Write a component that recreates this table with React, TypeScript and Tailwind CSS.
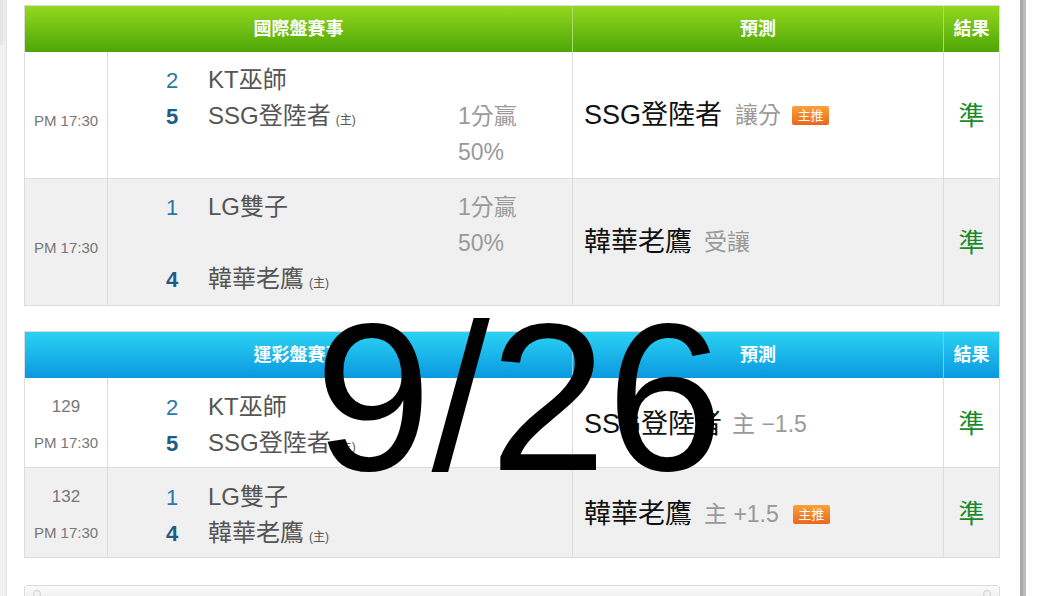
import React from "react";

type Team = { num: string; name: string; home?: boolean; win?: boolean };

const Num = ({ t }: { t: Team }) => (
  <span
    className={
      "w-[24px] text-center text-[22px] " +
      (t.win ? "font-bold text-[#1b5c88]" : "text-[#2a77ab]")
    }
  >
    {t.num}
  </span>
);

const TeamLine = ({ t }: { t: Team }) => (
  <div className="flex items-baseline h-[36px] leading-[36px]">
    <Num t={t} />
    <span className="ml-[24px] text-[24px] text-[#555]">{t.name}</span>
    {t.home && <span className="ml-[5px] text-[12px] text-[#555]">(主)</span>}
  </div>
);

const Empty = () => <div className="h-[36px]" />;

const Badge = () => (
  <span className="ml-[11px] inline-flex items-center justify-center h-[19px] w-[37px] rounded-[2px] bg-gradient-to-b from-[#f9a23a] to-[#e9661b] text-white text-[13px] leading-none">
    主推
  </span>
);

const Header = ({ title, from, to, sep }: { title: string; from: string; to: string; sep: string }) => (
  <div className={"grid grid-cols-[547px_371px_1fr] h-[46px] text-white font-bold text-[18px] " + from + " " + to + " bg-gradient-to-b"}>
    <div className="flex items-center justify-center">{title}</div>
    <div className={"flex items-center justify-center border-l " + sep}>預測</div>
    <div className={"flex items-center justify-center border-l " + sep}>結果</div>
  </div>
);

const Result = () => (
  <div className="border-l border-[#dcdcdc] flex items-center justify-center pt-[3px] text-[26px] text-[#1b8a2c]">準</div>
);

export default function App() {
  return (
    <div className="relative w-[1038px] h-[596px] overflow-hidden bg-white flex font-['Liberation_Sans','Noto_Sans_CJK_TC',sans-serif]">
      {/* left edge */}
      <div className="w-[7px] flex flex-col border-r border-[#e2e2e2]">
        <div className="h-[45px] bg-gradient-to-r from-[#e4e4e4] to-[#efefef]" />
        <div className="flex-1 bg-[#f1f1f1]" />
      </div>

      <main className="w-[1013px] pl-[17px] pr-[20px] pt-[5px] flex flex-col">
        {/* Table 1 */}
        <div className="border border-[#dcdcdc]">
          <Header title="國際盤賽事" from="from-[#93d81d]" to="to-[#4da608]" sep="border-[#a8dd6a]" />
          {/* row 1 */}
          <div className="grid grid-cols-[82px_465px_371px_1fr] bg-white">
            <div className="flex items-center justify-center pt-[12px] text-[15px] text-[#777]">PM 17:30</div>
            <div className="border-l border-[#dcdcdc] flex pl-[52px] pt-[10px] pb-[8px]">
              <div className="w-[298px]">
                <TeamLine t={{ num: "2", name: "KT巫師" }} />
                <TeamLine t={{ num: "5", name: "SSG登陸者", home: true, win: true }} />
              </div>
              <div className="text-[23px] text-[#9a9a9a] leading-[36px]">
                <Empty />
                <div>1分贏</div>
                <div>50%</div>
              </div>
            </div>
            <div className="border-l border-[#dcdcdc] flex items-center pl-[11px]">
              <span className="text-[27px] text-[#111]">SSG登陸者</span>
              <span className="ml-[13px] text-[23px] text-[#999]">讓分</span>
              <Badge />
            </div>
            <Result />
          </div>
          {/* row 2 */}
          <div className="grid grid-cols-[82px_465px_371px_1fr] bg-[#f0f0f0] border-t border-[#dcdcdc]">
            <div className="flex items-center justify-center pt-[12px] text-[15px] text-[#777]">PM 17:30</div>
            <div className="border-l border-[#dcdcdc] flex pl-[52px] pt-[10px] pb-[8px]">
              <div className="w-[298px]">
                <TeamLine t={{ num: "1", name: "LG雙子" }} />
                <Empty />
                <TeamLine t={{ num: "4", name: "韓華老鷹", home: true, win: true }} />
              </div>
              <div className="text-[23px] text-[#9a9a9a] leading-[36px]">
                <div>1分贏</div>
                <div>50%</div>
              </div>
            </div>
            <div className="border-l border-[#dcdcdc] flex items-center pl-[11px]">
              <span className="text-[27px] text-[#111]">韓華老鷹</span>
              <span className="ml-[12px] text-[23px] text-[#999]">受讓</span>
            </div>
            <Result />
          </div>
        </div>

        {/* Table 2 */}
        <div className="mt-[25px] border border-[#dcdcdc]">
          <Header title="運彩盤賽事" from="from-[#2bd2f2]" to="to-[#0b98e0]" sep="border-[#6fd0f2]" />
          <div className="grid grid-cols-[82px_465px_371px_1fr] bg-white">
            <div className="flex flex-col items-center pt-[11px] pb-[6px] text-[#777] leading-[36px]">
              <span className="text-[17px]">129</span>
              <span className="text-[15px]">PM 17:30</span>
            </div>
            <div className="border-l border-[#dcdcdc] pl-[52px] pt-[11px] pb-[6px]">
              <TeamLine t={{ num: "2", name: "KT巫師" }} />
              <TeamLine t={{ num: "5", name: "SSG登陸者", home: true, win: true }} />
            </div>
            <div className="border-l border-[#dcdcdc] flex items-center pl-[11px] pt-[3px]">
              <span className="text-[27px] text-[#111]">SSG登陸者</span>
              <span className="ml-[10px] text-[23px] text-[#999]">主 −1.5</span>
            </div>
            <Result />
          </div>
          <div className="grid grid-cols-[82px_465px_371px_1fr] bg-[#f0f0f0] border-t border-[#dcdcdc]">
            <div className="flex flex-col items-center pt-[11px] pb-[6px] text-[#777] leading-[36px]">
              <span className="text-[17px]">132</span>
              <span className="text-[15px]">PM 17:30</span>
            </div>
            <div className="border-l border-[#dcdcdc] pl-[52px] pt-[11px] pb-[6px]">
              <TeamLine t={{ num: "1", name: "LG雙子" }} />
              <TeamLine t={{ num: "4", name: "韓華老鷹", home: true, win: true }} />
            </div>
            <div className="border-l border-[#dcdcdc] flex items-center pl-[11px] pt-[3px]">
              <span className="text-[27px] text-[#111]">韓華老鷹</span>
              <span className="ml-[12px] text-[23px] text-[#999]">主 +1.5</span>
              <span className="ml-[3px] flex"><Badge /></span>
            </div>
            <Result />
          </div>
        </div>

        {/* bottom box */}
        <div className="mt-[27px] h-[40px] border border-[#dcdcdc] rounded-[3px] bg-gradient-to-b from-[#fbfbfb] to-[#efefef] flex justify-between px-[8px] pt-[4px]">
          <span className="w-[8px] h-[8px] rounded-full border border-[#ccc]" />
          <span className="w-[8px] h-[8px] rounded-full border border-[#ccc]" />
        </div>
      </main>

      {/* scrollbar */}
      <div className="w-[6px] flex">
        <div className="w-[3px] bg-[#a9a9a9]" />
        <div className="w-[3px] bg-[#bcbcbc]" />
      </div>
      <div className="flex-1 bg-white" />

      {/* overlay date */}
      <div className="absolute left-0 right-0 top-[293px] text-center text-[210px] leading-none text-black font-['Liberation_Sans',sans-serif] pointer-events-none">
        9/26
      </div>
    </div>
  );
}
